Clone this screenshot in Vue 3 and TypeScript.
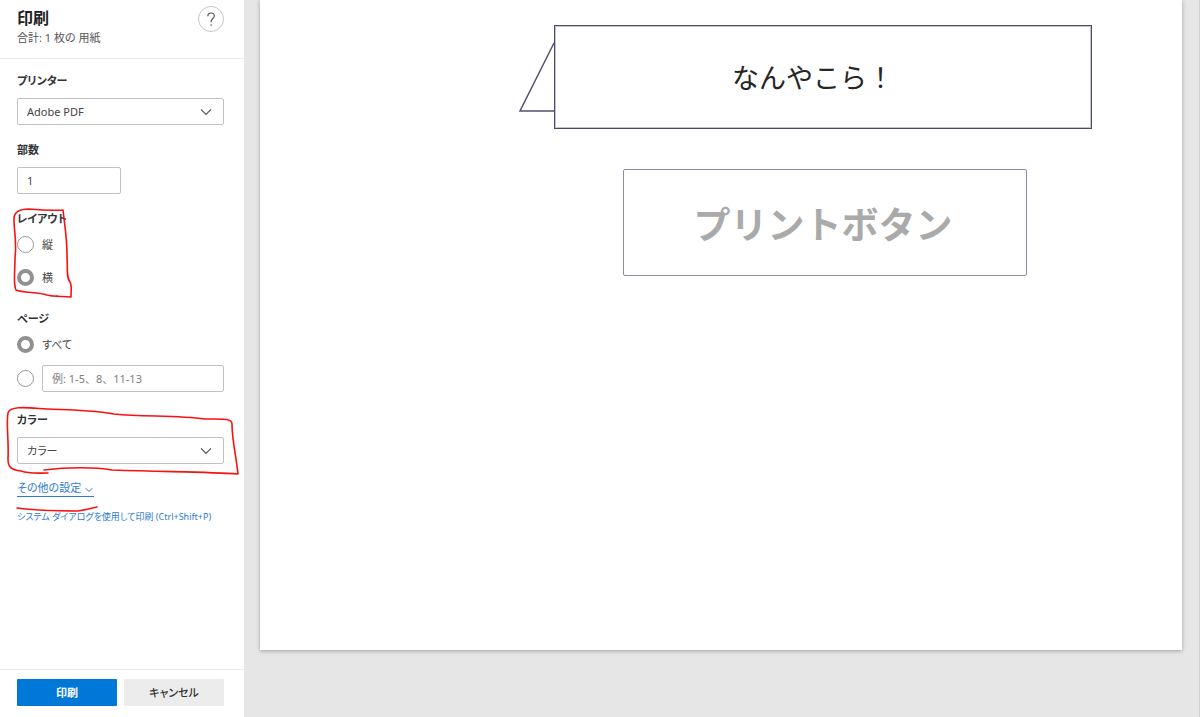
<script setup lang="ts">
import { ref } from 'vue'

const printer = ref('Adobe PDF')
const copies = ref('1')
const layout = ref('landscape')
const pages = ref('all')
const range = ref('')
const color = ref('カラー')
</script>

<template>
  <div class="print">
    <form class="sidebar" @submit.prevent>
      <header class="head">
        <div>
          <h1>印刷</h1>
          <p>合計: 1 枚の 用紙</p>
        </div>
        <button class="help" type="button" aria-label="ヘルプ">
          <svg viewBox="0 0 24 24" aria-hidden="true">
            <path d="M8.800 9.200C8.800 7.100 10.100 6 12.100 6s3.200 1.200 3.200 2.900c0 2.700-3.200 3-3.200 5.900v.5M12.100 17.200v1.600" />
          </svg>
        </button>
      </header>

      <div class="body">
        <div class="field">
          <label class="label" for="printer">プリンター</label>
          <div class="select">
            <select id="printer" v-model="printer"><option>Adobe PDF</option></select>
            <svg viewBox="0 0 12 8" aria-hidden="true"><path d="M1 1.3l5 5 5-5" /></svg>
          </div>
        </div>

        <div class="field">
          <label class="label" for="copies">部数</label>
          <input id="copies" v-model="copies" class="box copies" type="text" />
        </div>

        <fieldset class="field layout">
          <legend class="label">レイアウト</legend>
          <label class="option"><input v-model="layout" type="radio" name="layout" value="portrait" />縦</label>
          <label class="option"><input v-model="layout" type="radio" name="layout" value="landscape" />横</label>
        </fieldset>

        <fieldset class="field pages">
          <legend class="label">ページ</legend>
          <label class="option"><input v-model="pages" type="radio" name="pages" value="all" />すべて</label>
          <div class="option">
            <input v-model="pages" type="radio" name="pages" value="range" aria-label="ページ範囲" />
            <input v-model="range" class="box range" type="text" placeholder="例: 1-5、8、11-13" aria-label="範囲" />
          </div>
        </fieldset>

        <div class="field color">
          <label class="label" for="color">カラー</label>
          <div class="select">
            <select id="color" v-model="color"><option>カラー</option></select>
            <svg viewBox="0 0 12 8" aria-hidden="true"><path d="M1 1.3l5 5 5-5" /></svg>
          </div>
        </div>

        <a class="more" href="#">その他の設定
          <svg viewBox="0 0 8 6" aria-hidden="true"><path d="M.7 1.2L4 4.5l3.3-3.3" /></svg>
        </a>
        <a class="system" href="#">システム ダイアログを使用して印刷 (Ctrl+Shift+P)</a>
      </div>

      <footer class="foot">
        <button class="primary" type="submit">印刷</button>
        <button type="button">キャンセル</button>
      </footer>

      <svg class="marks" viewBox="0 0 244 540" aria-hidden="true">
        <path d="M63 210C48 211 40 210 29 209C19 209 14 212 14 219C14 232 17 242 15 258C15 272 13 284 16 290C23 293 38 292 47 295C55 297 62 296 71 297C71 291 72 285 70 282C66 277 68 270 67 256C67 237 65 228 63 210M51 296H58" />
        <path d="M48 473C37 473 30 474 21 471C11 470 8 467 8 459C9 442 6 423 8 413C10 405 30 408 47 409C70 410 92 410 114 414C145 417 176 415 205 419C222 419 232 418 232 424C232 440 236 455 238 474C211 472 177 472 112 470C96 467 67 467 44 470" />
        <path d="M17 508C39 511 60 511 78 511C86 510 92 508 97 507" />
      </svg>
    </form>

    <main class="preview">
      <article class="sheet">
        <div class="bubble">
          <svg class="tail" viewBox="0 0 36 72" aria-hidden="true"><path d="M35 2L1 70H35" /></svg>
          なんやこら！
        </div>
        <button class="print-button" type="button">プリントボタン</button>
      </article>
    </main>
  </div>
</template>

<style>
body {
  margin: 0;
}
</style>

<style scoped>
* {
  box-sizing: border-box;
}

.print {
  display: flex;
  min-height: 100vh;
  font-family: "Noto Sans", "Noto Sans CJK JP", sans-serif;
  font-size: 11px;
  line-height: 16px;
  color: #444;
}

button,
input,
select {
  margin: 0;
  font: inherit;
  color: inherit;
  font-feature-settings: inherit;
}

.sidebar {
  position: relative;
  display: flex;
  flex-direction: column;
  flex: 0 0 244px;
  min-width: 0;
  background: #fff;
  font-feature-settings: "palt";
}

.head {
  display: flex;
  justify-content: space-between;
  align-items: flex-start;
  padding: 6px 20px 12px 17px;
  border-bottom: 1px solid #ebebeb;
}

h1 {
  margin: 2px 0;
  font-size: 16px;
  line-height: 20px;
  color: #222;
}

p {
  margin: 0;
  color: #555;
}

.help {
  width: 26px;
  height: 26px;
  padding: 0;
  border: 1px solid #c6c6c6;
  border-radius: 50%;
  background: #fff;
}

.help svg {
  display: block;
  width: 24px;
  height: 24px;
}

svg path {
  fill: none;
  stroke: #555;
  stroke-width: 1.2;
}

.body {
  display: flex;
  flex-direction: column;
  align-items: flex-start;
  flex: 1;
  padding: 14px 20px 0 17px;
}

.field {
  width: 100%;
  min-width: 0;
  margin: 0 0 17px;
  padding: 0;
  border: 0;
}

.label {
  display: block;
  margin: 0 0 9px;
  padding: 0;
  font-weight: 600;
  color: #333;
}

.select {
  position: relative;
}

select,
.box {
  display: block;
  width: 100%;
  min-width: 0;
  height: 27px;
  padding: 0 9px;
  border: 1px solid #c2c2c2;
  border-radius: 2px;
  background: #fff;
  appearance: none;
}

.select svg {
  position: absolute;
  top: 10px;
  right: 12px;
  width: 12px;
  height: 8px;
  pointer-events: none;
}

.box.copies {
  width: 50%;
}

.range {
  font-feature-settings: normal;
}

.layout {
  margin-bottom: 25px;
}

.pages {
  margin-bottom: 20px;
}

.color {
  margin-bottom: 16px;
}

.option {
  display: flex;
  align-items: center;
  gap: 8px;
  min-height: 17px;
}

.layout .option + .option {
  margin-top: 16px;
}

.pages .option + .option {
  margin-top: 12px;
}

input[type="radio"] {
  flex: none;
  width: 17px;
  height: 17px;
  border: 1px solid #999;
  border-radius: 50%;
  background: #fff;
  appearance: none;
}

input[type="radio"]:checked {
  border: 4px solid #919191;
}

.box::placeholder {
  color: #808080;
  opacity: 1;
}

a {
  color: #2b7cd3;
  text-decoration: none;
}

.more {
  display: flex;
  align-items: center;
  gap: 4px;
  border-bottom: 1px solid #2b7cd3;
}

.more svg {
  width: 8px;
  height: 6px;
  margin: 3px 1px 0 0;
}

.more path {
  stroke: #2b7cd3;
  stroke-width: 1;
}

.system {
  margin-top: 12px;
  font-size: 9px;
  white-space: nowrap;
}

.foot {
  display: flex;
  gap: 7px;
  padding: 9px 20px 11px 17px;
  border-top: 1px solid #ebebeb;
}

.foot button {
  flex: 1;
  height: 27px;
  padding: 0;
  border: 0;
  border-radius: 1px;
  background: #ececec;
  color: #333;
  font-weight: 500;
}

.foot .primary {
  background: #0078d7;
  color: #fff;
  font-weight: 700;
}

.marks {
  position: absolute;
  top: 0;
  left: 0;
  width: 244px;
  height: 540px;
  pointer-events: none;
}

.marks path {
  stroke: #fa1010;
  stroke-width: 1.6;
  stroke-linecap: round;
  stroke-linejoin: round;
}

.preview {
  flex: 1;
  min-width: 0;
  padding: 0 17px 67px 16px;
  border-right: 1px solid #d2d2d2;
  background: #e6e6e6;
}

.sheet {
  min-height: calc(100vh - 67px);
  padding: 25px 90px 25px 294px;
  background: #fff;
  box-shadow: 0 1px 4px #0000004d;
}

.bubble {
  position: relative;
  display: flex;
  align-items: center;
  justify-content: center;
  height: 104px;
  padding-right: 20px;
  border: 1px solid #4c4b6b;
  box-shadow: inset 0 0 0 1px #4c4b6b55;
  font-family: "Noto Sans CJK JP", sans-serif;
  font-size: 27px;
  font-weight: 400;
  color: #262626;
}

.tail {
  position: absolute;
  top: 15px;
  right: 100%;
  width: 36px;
  height: 72px;
}

.tail path {
  stroke: #535273;
  stroke-width: 1.5;
}

.print-button {
  display: block;
  width: calc(100% - 134px);
  height: 107px;
  margin: 40px 65px 0 69px;
  padding: 0 4px 0 0;
  border: 1px solid #8c8aaa;
  border-radius: 2px;
  background: #fff;
  font-family: "Noto Sans CJK JP", sans-serif;
  font-size: 37px;
  font-weight: 700;
  color: #aaa;
}
</style>
